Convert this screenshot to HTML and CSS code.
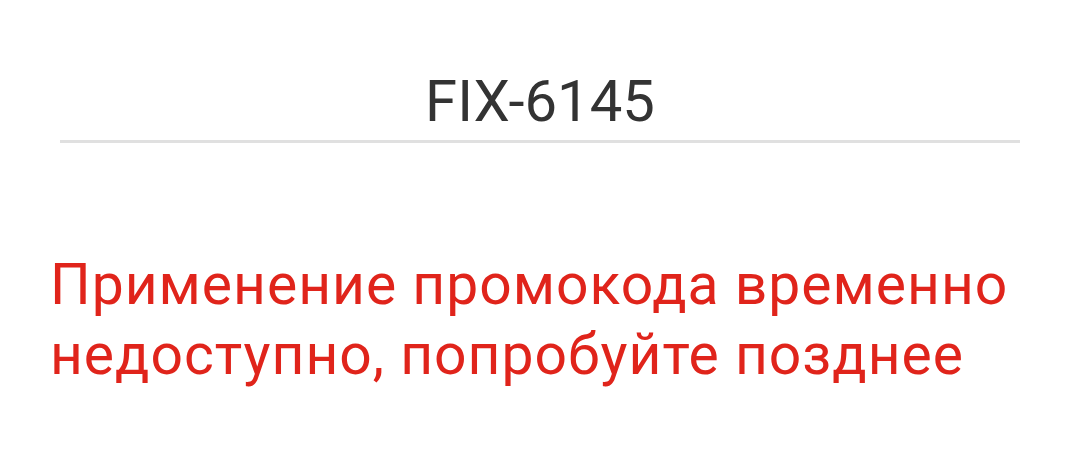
FILE: index.html
```html
<!DOCTYPE html>
<html lang="ru">
<head>
    <meta charset="UTF-8">
    <meta name="viewport" content="width=device-width, initial-scale=1.0">
    <title>Промокод</title>
    <link rel="stylesheet" href="styles.css">
</head>
<body>
    <div class="promo">
        <div class="promo-field">
            <div class="promo-code">FIX-6145</div>
        </div>
        <p class="promo-error">Применение промокода временно недоступно, попробуйте позднее</p>
    </div>
</body>
</html>
```

FILE: styles.css
```css
body {
    margin: 0;
    background: #fff;
    font-family: Roboto, 'Noto Sans', sans-serif;
}

.promo {
    padding: 0 60px;
}

.promo-field {
    padding-top: 62px;
    border-bottom: 3px solid #e0e0e0;
}

.promo-code {
    text-align: center;
    color: #333;
    font-size: 58px;
    line-height: 78px;
}

.promo-error {
    margin: 107px 0 0 -10px;
    color: #e0241b;
    font-size: 57px;
    line-height: 70px;
    letter-spacing: 1px;
}
```
